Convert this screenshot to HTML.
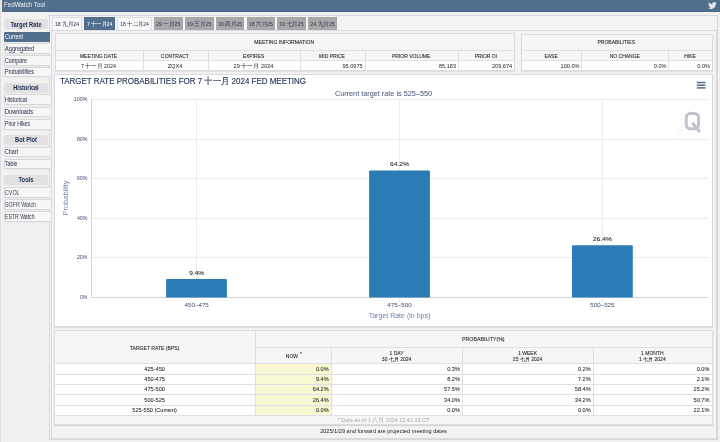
<!DOCTYPE html><html><head><meta charset="utf-8"><style>
html,body{margin:0;padding:0;width:720px;height:442px;overflow:hidden;background:#f1f1f1;font-family:"Liberation Sans", sans-serif;position:relative}
div{box-sizing:border-box}
</style></head><body>
<div style="position:absolute;left:0px;top:0px;width:1px;height:442px;background:#dedede"></div>
<div style="position:absolute;left:1.6px;top:0px;width:718.4px;height:11.8px;background:#516e8d;border-bottom:1px solid #4a6685"></div>
<svg style="position:absolute;left:707.8px;top:2.4px" width="8.8" height="7.2" viewBox="0 0 24 20"><path fill="#e2e6ec" d="M24 2.4c-.9.4-1.8.6-2.8.8 1-.6 1.8-1.6 2.2-2.7-1 .6-2 1-3.1 1.2C19.4.7 18.1 0 16.6 0c-2.7 0-4.9 2.2-4.9 4.9 0 .4 0 .8.1 1.1C7.7 5.8 4.1 3.9 1.7.9c-.5.7-.7 1.6-.7 2.5 0 1.700.9 3.2 2.2 4.1-.8 0-1.6-.2-2.2-.6v.1c0 2.4 1.7 4.4 3.9 4.8-.4.1-.8.2-1.3.2-.3 0-.6 0-.9-.1.6 2 2.4 3.4 4.6 3.4-1.700 1.3-3.8 2.1-6.100 2.1-.4 0-.8 0-1.2-.1 2.2 1.4 4.8 2.2 7.5 2.2 9.1 0 14-7.5 14-14v-.6c1-.7 1.8-1.6 2.5-2.5z"/></svg>
<div style="position:absolute;left:49.2px;top:15px;width:668.8px;height:425.3px;border:1px solid #d7d8dd;background:#f3f3f3"></div>
<div style="position:absolute;left:3.8px;top:19.4px;width:44.6px;height:10.1px;background:#e1e1e1;border-radius:2.5px"></div>
<div style="position:absolute;left:4px;top:31.5px;width:46px;height:10.2px;background:#516e8d;border-radius:1px 0 0 1px"></div>
<div style="position:absolute;left:3.6px;top:42.9px;width:46.4px;height:10.9px;background:#f7f7f7;border:1px solid #d5d7dc;border-right:none;border-radius:2.5px 0 0 2.5px;box-shadow:0 0.6px 0 rgba(0,0,0,0.05)"></div>
<div style="position:absolute;left:3.6px;top:54.8px;width:46.4px;height:10.9px;background:#f7f7f7;border:1px solid #d5d7dc;border-right:none;border-radius:2.5px 0 0 2.5px;box-shadow:0 0.6px 0 rgba(0,0,0,0.05)"></div>
<div style="position:absolute;left:3.6px;top:66.6px;width:46.4px;height:10.9px;background:#f7f7f7;border:1px solid #d5d7dc;border-right:none;border-radius:2.5px 0 0 2.5px;box-shadow:0 0.6px 0 rgba(0,0,0,0.05)"></div>
<div style="position:absolute;left:3.8px;top:82.7px;width:44.6px;height:10.1px;background:#e1e1e1;border-radius:2.5px"></div>
<div style="position:absolute;left:3.6px;top:94.3px;width:46.4px;height:10.9px;background:#f7f7f7;border:1px solid #d5d7dc;border-right:none;border-radius:2.5px 0 0 2.5px;box-shadow:0 0.6px 0 rgba(0,0,0,0.05)"></div>
<div style="position:absolute;left:3.6px;top:106.5px;width:46.4px;height:10.9px;background:#f7f7f7;border:1px solid #d5d7dc;border-right:none;border-radius:2.5px 0 0 2.5px;box-shadow:0 0.6px 0 rgba(0,0,0,0.05)"></div>
<div style="position:absolute;left:3.6px;top:118.7px;width:46.4px;height:10.9px;background:#f7f7f7;border:1px solid #d5d7dc;border-right:none;border-radius:2.5px 0 0 2.5px;box-shadow:0 0.6px 0 rgba(0,0,0,0.05)"></div>
<div style="position:absolute;left:3.8px;top:135.1px;width:44.6px;height:10.1px;background:#e1e1e1;border-radius:2.5px"></div>
<div style="position:absolute;left:3.6px;top:146.5px;width:46.4px;height:10.9px;background:#f7f7f7;border:1px solid #d5d7dc;border-right:none;border-radius:2.5px 0 0 2.5px;box-shadow:0 0.6px 0 rgba(0,0,0,0.05)"></div>
<div style="position:absolute;left:3.6px;top:158.6px;width:46.4px;height:10.9px;background:#f7f7f7;border:1px solid #d5d7dc;border-right:none;border-radius:2.5px 0 0 2.5px;box-shadow:0 0.6px 0 rgba(0,0,0,0.05)"></div>
<div style="position:absolute;left:3.8px;top:175.1px;width:44.6px;height:10.1px;background:#e1e1e1;border-radius:2.5px"></div>
<div style="position:absolute;left:3.6px;top:187.3px;width:46.4px;height:10.9px;background:#f7f7f7;border:1px solid #d5d7dc;border-right:none;border-radius:2.5px 0 0 2.5px;box-shadow:0 0.6px 0 rgba(0,0,0,0.05)"></div>
<div style="position:absolute;left:3.6px;top:199.1px;width:46.4px;height:10.9px;background:#f7f7f7;border:1px solid #d5d7dc;border-right:none;border-radius:2.5px 0 0 2.5px;box-shadow:0 0.6px 0 rgba(0,0,0,0.05)"></div>
<div style="position:absolute;left:3.6px;top:210.9px;width:46.4px;height:10.9px;background:#f7f7f7;border:1px solid #d5d7dc;border-right:none;border-radius:2.5px 0 0 2.5px;box-shadow:0 0.6px 0 rgba(0,0,0,0.05)"></div>
<div style="position:absolute;left:52px;top:17.3px;width:30px;height:13.2px;background:#f8f8f8;border:1px solid #dcdde1;border-bottom:none"></div>
<div style="position:absolute;left:84px;top:17.3px;width:31.3px;height:13.2px;background:#516e8d"></div>
<div style="position:absolute;left:117.3px;top:17.3px;width:34.4px;height:13.2px;background:#f8f8f8;border:1px solid #dcdde1;border-bottom:none"></div>
<div style="position:absolute;left:153.8px;top:17.3px;width:28.8px;height:13.2px;background:#a8a8a8"></div>
<div style="position:absolute;left:184.9px;top:17.3px;width:28.9px;height:13.2px;background:#a8a8a8"></div>
<div style="position:absolute;left:216px;top:17.3px;width:28.4px;height:13.2px;background:#a8a8a8"></div>
<div style="position:absolute;left:246.7px;top:17.3px;width:28.4px;height:13.2px;background:#a8a8a8"></div>
<div style="position:absolute;left:277.3px;top:17.3px;width:28.5px;height:13.2px;background:#a8a8a8"></div>
<div style="position:absolute;left:308px;top:17.3px;width:29px;height:13.2px;background:#a8a8a8"></div>
<div style="position:absolute;left:51.2px;top:30.4px;width:665.6px;height:408.4px;border:1px solid #dadbe0;background:#f3f3f3"></div>
<div style="position:absolute;left:54.5px;top:32.8px;width:460.5px;height:38.60000000000001px;background:#f6f6f6;border:1px solid #dbdce0;box-shadow:0 1px 1px rgba(0,0,0,0.08)"></div>
<div style="position:absolute;left:55.5px;top:59.8px;width:458.5px;height:10.600000000000009px;background:#ffffff"></div>
<div style="position:absolute;left:54.5px;top:50.0px;width:459.5px;height:1px;background:#dfe0e3"></div>
<div style="position:absolute;left:54.5px;top:59.8px;width:459.5px;height:1px;background:#dfe0e3"></div>
<div style="position:absolute;left:142.5px;top:50.0px;width:1px;height:21.400000000000006px;background:#dfe0e3"></div>
<div style="position:absolute;left:207.5px;top:50.0px;width:1px;height:21.400000000000006px;background:#dfe0e3"></div>
<div style="position:absolute;left:299.5px;top:50.0px;width:1px;height:21.400000000000006px;background:#dfe0e3"></div>
<div style="position:absolute;left:364.5px;top:50.0px;width:1px;height:21.400000000000006px;background:#dfe0e3"></div>
<div style="position:absolute;left:457.8px;top:50.0px;width:1px;height:21.400000000000006px;background:#dfe0e3"></div>
<div style="position:absolute;left:520.8px;top:33.5px;width:192.0px;height:37.900000000000006px;background:#f6f6f6;border:1px solid #dbdce0;box-shadow:0 1px 1px rgba(0,0,0,0.08)"></div>
<div style="position:absolute;left:521.8px;top:59.8px;width:190.0px;height:10.600000000000009px;background:#ffffff"></div>
<div style="position:absolute;left:520.8px;top:50.0px;width:191.0px;height:1px;background:#dfe0e3"></div>
<div style="position:absolute;left:520.8px;top:59.8px;width:191.0px;height:1px;background:#dfe0e3"></div>
<div style="position:absolute;left:581.3px;top:50.0px;width:1px;height:21.400000000000006px;background:#dfe0e3"></div>
<div style="position:absolute;left:668.3px;top:50.0px;width:1px;height:21.400000000000006px;background:#dfe0e3"></div>
<div style="position:absolute;left:54.3px;top:73.5px;width:658.5px;height:253px;background:#ffffff;border:1px solid #d9dade;box-shadow:0 1px 1px rgba(0,0,0,0.08)"></div>
<svg style="position:absolute;left:0;top:0" width="720" height="442"><line x1="91" x2="708" y1="99.5" y2="99.5" stroke="#ebebeb" stroke-width="1"/><line x1="91" x2="708" y1="139.5" y2="139.5" stroke="#ebebeb" stroke-width="1"/><line x1="91" x2="708" y1="178.5" y2="178.5" stroke="#ebebeb" stroke-width="1"/><line x1="91" x2="708" y1="218.5" y2="218.5" stroke="#ebebeb" stroke-width="1"/><line x1="91" x2="708" y1="257.5" y2="257.5" stroke="#ebebeb" stroke-width="1"/><line x1="196.5" x2="196.5" y1="99" y2="297.5" stroke="#ebebeb" stroke-width="1"/><line x1="196.5" x2="196.5" y1="297.5" y2="301.5" stroke="#ebebeb" stroke-width="1"/><line x1="399.5" x2="399.5" y1="99" y2="297.5" stroke="#ebebeb" stroke-width="1"/><line x1="399.5" x2="399.5" y1="297.5" y2="301.5" stroke="#ebebeb" stroke-width="1"/><line x1="602.5" x2="602.5" y1="99" y2="297.5" stroke="#ebebeb" stroke-width="1"/><line x1="602.5" x2="602.5" y1="297.5" y2="301.5" stroke="#ebebeb" stroke-width="1"/><line x1="91" x2="708" y1="297.5" y2="297.5" stroke="#d3d4d8" stroke-width="1"/><line x1="91.5" x2="91.5" y1="99" y2="297.5" stroke="#d3d4d8" stroke-width="1"/><path d="M166.1 297.5 V279.888 Q166.1 278.888 167.1 278.888 H225.89999999999998 Q226.89999999999998 278.888 226.89999999999998 279.888 V297.5 Z" fill="#2b7bb5"/><path d="M369.1 297.5 V171.38400000000001 Q369.1 170.38400000000001 370.1 170.38400000000001 H428.90000000000003 Q429.90000000000003 170.38400000000001 429.90000000000003 171.38400000000001 V297.5 Z" fill="#2b7bb5"/><path d="M572.0 297.5 V246.228 Q572.0 245.228 573.0 245.228 H631.8 Q632.8 245.228 632.8 246.228 V297.5 Z" fill="#2b7bb5"/><rect x="696.8" y="81.75" width="8.7" height="1.5" fill="#516e8d"/><rect x="696.8" y="84.45" width="8.7" height="1.5" fill="#516e8d"/><rect x="696.8" y="87.15" width="8.7" height="1.5" fill="#516e8d"/></svg>
<div style="position:absolute;left:54.2px;top:330.4px;width:658.5px;height:94.80000000000001px;background:#f6f6f6;border:1px solid #dbdce0;box-shadow:0 1px 1px rgba(0,0,0,0.12)"></div>
<div style="position:absolute;left:55.2px;top:363.4px;width:656.5px;height:51.5px;background:#ffffff"></div>
<div style="position:absolute;left:255.0px;top:363.4px;width:76.0px;height:51.5px;background:#f8f8d2"></div>
<div style="position:absolute;left:54.2px;top:363.4px;width:657.5px;height:1px;background:#dfe0e3"></div>
<div style="position:absolute;left:54.2px;top:373.6px;width:657.5px;height:1px;background:#dfe0e3"></div>
<div style="position:absolute;left:54.2px;top:383.9px;width:657.5px;height:1px;background:#dfe0e3"></div>
<div style="position:absolute;left:54.2px;top:394.2px;width:657.5px;height:1px;background:#dfe0e3"></div>
<div style="position:absolute;left:54.2px;top:404.5px;width:657.5px;height:1px;background:#dfe0e3"></div>
<div style="position:absolute;left:54.2px;top:414.9px;width:657.5px;height:1px;background:#dfe0e3"></div>
<div style="position:absolute;left:255.0px;top:347.3px;width:456.70000000000005px;height:1px;background:#dfe0e3"></div>
<div style="position:absolute;left:255.0px;top:330.4px;width:1px;height:84.5px;background:#dfe0e3"></div>
<div style="position:absolute;left:331.0px;top:347.3px;width:1px;height:67.59999999999997px;background:#dfe0e3"></div>
<div style="position:absolute;left:462.2px;top:347.3px;width:1px;height:67.59999999999997px;background:#dfe0e3"></div>
<div style="position:absolute;left:593.0px;top:347.3px;width:1px;height:67.59999999999997px;background:#dfe0e3"></div>
<svg style="position:absolute;left:0;top:0;will-change:transform" width="720" height="442" font-family='"Liberation Sans", sans-serif'><text x="4" y="7.1" font-size="6.7" fill="#eef1f5" text-anchor="start" textLength="41" lengthAdjust="spacingAndGlyphs">FedWatch Tool</text><text x="26" y="26.5" font-size="6.3" fill="#1b2a4e" text-anchor="middle" font-weight="bold" textLength="31.2" lengthAdjust="spacingAndGlyphs">Target Rate</text><text x="5.1" y="38.9" font-size="6.5" fill="#ffffff" text-anchor="start" textLength="17.9" lengthAdjust="spacingAndGlyphs">Current</text><text x="5.0" y="50.6" font-size="6.5" fill="#2c3650" text-anchor="start" textLength="29.2" lengthAdjust="spacingAndGlyphs" stroke="#2c3650" stroke-width="0.05">Aggregated</text><text x="5.0" y="62.5" font-size="6.5" fill="#2c3650" text-anchor="start" textLength="21.9" lengthAdjust="spacingAndGlyphs" stroke="#2c3650" stroke-width="0.05">Compare</text><text x="5.0" y="74.3" font-size="6.5" fill="#2c3650" text-anchor="start" textLength="29" lengthAdjust="spacingAndGlyphs" stroke="#2c3650" stroke-width="0.05">Probabilities</text><text x="26" y="89.8" font-size="6.3" fill="#1b2a4e" text-anchor="middle" font-weight="bold" textLength="25.3" lengthAdjust="spacingAndGlyphs">Historical</text><text x="5.0" y="102.0" font-size="6.5" fill="#2c3650" text-anchor="start" textLength="21.9" lengthAdjust="spacingAndGlyphs" stroke="#2c3650" stroke-width="0.05">Historical</text><text x="5.0" y="114.2" font-size="6.5" fill="#2c3650" text-anchor="start" textLength="28" lengthAdjust="spacingAndGlyphs" stroke="#2c3650" stroke-width="0.05">Downloads</text><text x="5.0" y="126.4" font-size="6.5" fill="#2c3650" text-anchor="start" textLength="25" lengthAdjust="spacingAndGlyphs" stroke="#2c3650" stroke-width="0.05">Prior Hikes</text><text x="26" y="142.2" font-size="6.3" fill="#1b2a4e" text-anchor="middle" font-weight="bold" textLength="22" lengthAdjust="spacingAndGlyphs">Bot Plot</text><text x="5.0" y="154.2" font-size="6.5" fill="#2c3650" text-anchor="start" textLength="13" lengthAdjust="spacingAndGlyphs" stroke="#2c3650" stroke-width="0.05">Chart</text><text x="5.0" y="165.9" font-size="6.5" fill="#2c3650" text-anchor="start" textLength="12.5" lengthAdjust="spacingAndGlyphs" stroke="#2c3650" stroke-width="0.05">Table</text><text x="26" y="182.2" font-size="6.3" fill="#1b2a4e" text-anchor="middle" font-weight="bold" textLength="15" lengthAdjust="spacingAndGlyphs">Tools</text><text x="5.0" y="195.0" font-size="6.5" fill="#474e62" text-anchor="start" textLength="14.6" lengthAdjust="spacingAndGlyphs" stroke="#474e62" stroke-width="0.05">CVOL</text><text x="5.0" y="206.79999999999998" font-size="6.5" fill="#474e62" text-anchor="start" textLength="31" lengthAdjust="spacingAndGlyphs" stroke="#474e62" stroke-width="0.05">SOFR Watch</text><text x="5.0" y="218.6" font-size="6.5" fill="#3a4150" text-anchor="start" textLength="29.5" lengthAdjust="spacingAndGlyphs" stroke="#3a4150" stroke-width="0.05">ESTR Watch</text><text x="67.0" y="26.2" font-size="5.6" fill="#34405e" text-anchor="middle" textLength="24" lengthAdjust="spacingAndGlyphs" stroke="#34405e" stroke-width="0.05">18 九月24</text><text x="99.65" y="26.2" font-size="5.6" fill="#ffffff" text-anchor="middle" textLength="25.3" lengthAdjust="spacingAndGlyphs" stroke="#ffffff" stroke-width="0.05">7 十一月24</text><text x="134.5" y="26.2" font-size="5.6" fill="#34405e" text-anchor="middle" textLength="28.4" lengthAdjust="spacingAndGlyphs" stroke="#34405e" stroke-width="0.05">18 十二月24</text><text x="168.20000000000002" y="26.2" font-size="5.6" fill="#34405e" text-anchor="middle" textLength="24.3" lengthAdjust="spacingAndGlyphs" stroke="#34405e" stroke-width="0.05">29 一月25</text><text x="199.35" y="26.2" font-size="5.6" fill="#34405e" text-anchor="middle" textLength="24.4" lengthAdjust="spacingAndGlyphs" stroke="#34405e" stroke-width="0.05">19 三月25</text><text x="230.2" y="26.2" font-size="5.6" fill="#34405e" text-anchor="middle" textLength="23.9" lengthAdjust="spacingAndGlyphs" stroke="#34405e" stroke-width="0.05">30 四月25</text><text x="260.9" y="26.2" font-size="5.6" fill="#34405e" text-anchor="middle" textLength="23.9" lengthAdjust="spacingAndGlyphs" stroke="#34405e" stroke-width="0.05">18 六月25</text><text x="291.55" y="26.2" font-size="5.6" fill="#34405e" text-anchor="middle" textLength="24.0" lengthAdjust="spacingAndGlyphs" stroke="#34405e" stroke-width="0.05">30 七月25</text><text x="322.5" y="26.2" font-size="5.6" fill="#34405e" text-anchor="middle" textLength="24.5" lengthAdjust="spacingAndGlyphs" stroke="#34405e" stroke-width="0.05">24 九月25</text><text x="284.25" y="44.3" font-size="5" fill="#1a1a1a" text-anchor="middle" textLength="60" lengthAdjust="spacingAndGlyphs" stroke="#1a1a1a" stroke-width="0.07">MEETING INFORMATION</text><text x="98.5" y="57.8" font-size="5" fill="#1a1a1a" text-anchor="middle" stroke="#1a1a1a" stroke-width="0.07">MEETING DATE</text><text x="175.0" y="57.8" font-size="5" fill="#1a1a1a" text-anchor="middle" stroke="#1a1a1a" stroke-width="0.07">CONTRACT</text><text x="253.5" y="57.8" font-size="5" fill="#1a1a1a" text-anchor="middle" stroke="#1a1a1a" stroke-width="0.07">EXPIRES</text><text x="332.0" y="57.8" font-size="5" fill="#1a1a1a" text-anchor="middle" stroke="#1a1a1a" stroke-width="0.07">MID PRICE</text><text x="411.15" y="57.8" font-size="5" fill="#1a1a1a" text-anchor="middle" stroke="#1a1a1a" stroke-width="0.07">PRIOR VOLUME</text><text x="485.9" y="57.8" font-size="5" fill="#1a1a1a" text-anchor="middle" stroke="#1a1a1a" stroke-width="0.07">PRIOR OI</text><text x="98.5" y="68.2" font-size="5.6" fill="#1e1e1e" text-anchor="middle" textLength="35" lengthAdjust="spacingAndGlyphs">7 十一月 2024</text><text x="175.0" y="68.2" font-size="5.6" fill="#1e1e1e" text-anchor="middle">ZQX4</text><text x="253.5" y="68.2" font-size="5.6" fill="#1e1e1e" text-anchor="middle">29 十一月 2024</text><text x="362.7" y="68.2" font-size="5.6" fill="#1e1e1e" text-anchor="end">95.0975</text><text x="456.0" y="68.2" font-size="5.6" fill="#1e1e1e" text-anchor="end">85,183</text><text x="512.2" y="68.2" font-size="5.6" fill="#1e1e1e" text-anchor="end">209,674</text><text x="616.3" y="44.3" font-size="5" fill="#1a1a1a" text-anchor="middle" stroke="#1a1a1a" stroke-width="0.07">PROBABILITIES</text><text x="551.05" y="57.8" font-size="5" fill="#1a1a1a" text-anchor="middle" stroke="#1a1a1a" stroke-width="0.07">EASE</text><text x="624.8" y="57.8" font-size="5" fill="#1a1a1a" text-anchor="middle" stroke="#1a1a1a" stroke-width="0.07">NO CHANGE</text><text x="690.05" y="57.8" font-size="5" fill="#1a1a1a" text-anchor="middle" stroke="#1a1a1a" stroke-width="0.07">HIKE</text><text x="579.5" y="68.2" font-size="5.6" fill="#1e1e1e" text-anchor="end">100.0%</text><text x="666.5" y="68.2" font-size="5.6" fill="#1e1e1e" text-anchor="end">0.0%</text><text x="710.0" y="68.2" font-size="5.6" fill="#1e1e1e" text-anchor="end">0.0%</text><text x="60" y="83.8" font-size="8.6" fill="#22305a" text-anchor="start" textLength="246" lengthAdjust="spacingAndGlyphs" stroke="#22305a" stroke-width="0.12">TARGET RATE PROBABILITIES FOR 7 十一月 2024 FED MEETING</text><text x="383.5" y="95.8" font-size="6.3" fill="#42527a" text-anchor="middle" textLength="97.2" lengthAdjust="spacingAndGlyphs">Current target rate is 525–550</text><text x="87.4" y="101.2" font-size="5.4" fill="#3a4870" text-anchor="end" textLength="13.6" lengthAdjust="spacingAndGlyphs">100%</text><text x="87.4" y="141.2" font-size="5.4" fill="#3a4870" text-anchor="end" textLength="10.5" lengthAdjust="spacingAndGlyphs">80%</text><text x="87.4" y="180.2" font-size="5.4" fill="#3a4870" text-anchor="end" textLength="10.5" lengthAdjust="spacingAndGlyphs">60%</text><text x="87.4" y="220.2" font-size="5.4" fill="#3a4870" text-anchor="end" textLength="10.5" lengthAdjust="spacingAndGlyphs">40%</text><text x="87.4" y="259.2" font-size="5.4" fill="#3a4870" text-anchor="end" textLength="10.5" lengthAdjust="spacingAndGlyphs">20%</text><text x="87.4" y="299.2" font-size="5.4" fill="#3a4870" text-anchor="end" textLength="7.5" lengthAdjust="spacingAndGlyphs">0%</text><text x="196.7" y="274.8" font-size="6.2" fill="#2a2a2a" text-anchor="middle" textLength="14.7" lengthAdjust="spacingAndGlyphs" stroke="#2a2a2a" stroke-width="0.08">9.4%</text><text x="196.7" y="306.8" font-size="5.1" fill="#3f4c6c" text-anchor="middle" textLength="24.3" lengthAdjust="spacingAndGlyphs">450–475</text><text x="399.5" y="166.2" font-size="6.2" fill="#2a2a2a" text-anchor="middle" textLength="19.1" lengthAdjust="spacingAndGlyphs" stroke="#2a2a2a" stroke-width="0.08">64.2%</text><text x="399.5" y="306.8" font-size="5.1" fill="#3f4c6c" text-anchor="middle" textLength="24.3" lengthAdjust="spacingAndGlyphs">475–500</text><text x="602.4" y="241.2" font-size="6.2" fill="#2a2a2a" text-anchor="middle" textLength="19.1" lengthAdjust="spacingAndGlyphs" stroke="#2a2a2a" stroke-width="0.08">26.4%</text><text x="602.4" y="306.8" font-size="5.1" fill="#3f4c6c" text-anchor="middle" textLength="24.3" lengthAdjust="spacingAndGlyphs">500–525</text><text x="399.5" y="317.9" font-size="6.6" fill="#6e85a8" text-anchor="middle" textLength="61.6" lengthAdjust="spacingAndGlyphs">Target Rate (in bps)</text><text transform="translate(68.0,198.1) rotate(-90)" font-size="6.4" fill="#7388aa" text-anchor="middle" textLength="35" lengthAdjust="spacingAndGlyphs">Probability</text><g fill="none" stroke="#c0c4ce" stroke-width="3"><rect x="686.3" y="113.5" width="12.2" height="15.3" rx="4"/><path d="M692.4 122.8 L699.8 132"/></g><line x1="695" y1="102.5" x2="696" y2="102.5" stroke="#eceef2" stroke-width="0.7"/><line x1="693" y1="105" x2="695" y2="105" stroke="#eceef2" stroke-width="0.7"/><line x1="690.5" y1="107" x2="693" y2="107" stroke="#eceef2" stroke-width="0.7"/><line x1="688" y1="110" x2="691" y2="110" stroke="#eceef2" stroke-width="0.7"/><line x1="684" y1="113.5" x2="686" y2="113.5" stroke="#eceef2" stroke-width="0.7"/><line x1="682" y1="116" x2="685" y2="116" stroke="#eceef2" stroke-width="0.7"/><line x1="679.5" y1="119" x2="685" y2="119" stroke="#eceef2" stroke-width="0.7"/><line x1="677" y1="121.5" x2="684" y2="121.5" stroke="#eceef2" stroke-width="0.7"/><line x1="681" y1="124.5" x2="685" y2="124.5" stroke="#eceef2" stroke-width="0.7"/><line x1="680" y1="127" x2="685" y2="127" stroke="#eceef2" stroke-width="0.7"/><line x1="679" y1="130" x2="684" y2="130" stroke="#eceef2" stroke-width="0.7"/><line x1="678" y1="133.5" x2="681" y2="133.5" stroke="#eceef2" stroke-width="0.7"/><line x1="677" y1="136" x2="679" y2="136" stroke="#eceef2" stroke-width="0.7"/><text x="154.6" y="349.5" font-size="5" fill="#1a1a1a" text-anchor="middle" textLength="49.6" lengthAdjust="spacingAndGlyphs" stroke="#1a1a1a" stroke-width="0.07">TARGET RATE (BPS)</text><text x="483.35" y="341.0" font-size="5" fill="#1a1a1a" text-anchor="middle" textLength="42.5" lengthAdjust="spacingAndGlyphs" stroke="#1a1a1a" stroke-width="0.07">PROBABILITY(%)</text><text x="291.9" y="357.6" font-size="5" fill="#1a1a1a" text-anchor="middle" stroke="#1a1a1a" stroke-width="0.07">NOW</text><text x="300.8" y="355.6" font-size="4.5" fill="#1a1a1a" text-anchor="middle" stroke="#1a1a1a" stroke-width="0.07">*</text><text x="396.6" y="354.7" font-size="5" fill="#1a1a1a" text-anchor="middle" stroke="#1a1a1a" stroke-width="0.07">1 DAY</text><text x="396.6" y="361.2" font-size="5" fill="#1a1a1a" text-anchor="middle" stroke="#1a1a1a" stroke-width="0.07">30 七月 2024</text><text x="527.6" y="354.7" font-size="5" fill="#1a1a1a" text-anchor="middle" stroke="#1a1a1a" stroke-width="0.07">1 WEEK</text><text x="527.6" y="361.2" font-size="5" fill="#1a1a1a" text-anchor="middle" stroke="#1a1a1a" stroke-width="0.07">25 七月 2024</text><text x="652.35" y="354.7" font-size="5" fill="#1a1a1a" text-anchor="middle" stroke="#1a1a1a" stroke-width="0.07">1 MONTH</text><text x="652.35" y="361.2" font-size="5" fill="#1a1a1a" text-anchor="middle" stroke="#1a1a1a" stroke-width="0.07">1 七月 2024</text><text x="154.6" y="370.79999999999995" font-size="5.6" fill="#1e1e1e" text-anchor="middle" stroke="#1e1e1e" stroke-width="0.06">425-450</text><text x="328.7" y="370.79999999999995" font-size="5.6" fill="#1e1e1e" text-anchor="end" stroke="#1e1e1e" stroke-width="0.06">0.0%</text><text x="459.9" y="370.79999999999995" font-size="5.6" fill="#1e1e1e" text-anchor="end" stroke="#1e1e1e" stroke-width="0.06">0.3%</text><text x="590.7" y="370.79999999999995" font-size="5.6" fill="#1e1e1e" text-anchor="end" stroke="#1e1e1e" stroke-width="0.06">0.2%</text><text x="709.4000000000001" y="370.79999999999995" font-size="5.6" fill="#1e1e1e" text-anchor="end" stroke="#1e1e1e" stroke-width="0.06">0.0%</text><text x="154.6" y="381.0" font-size="5.6" fill="#1e1e1e" text-anchor="middle" stroke="#1e1e1e" stroke-width="0.06">450-475</text><text x="328.7" y="381.0" font-size="5.6" fill="#1e1e1e" text-anchor="end" stroke="#1e1e1e" stroke-width="0.06">9.4%</text><text x="459.9" y="381.0" font-size="5.6" fill="#1e1e1e" text-anchor="end" stroke="#1e1e1e" stroke-width="0.06">8.2%</text><text x="590.7" y="381.0" font-size="5.6" fill="#1e1e1e" text-anchor="end" stroke="#1e1e1e" stroke-width="0.06">7.2%</text><text x="709.4000000000001" y="381.0" font-size="5.6" fill="#1e1e1e" text-anchor="end" stroke="#1e1e1e" stroke-width="0.06">2.1%</text><text x="154.6" y="391.29999999999995" font-size="5.6" fill="#1e1e1e" text-anchor="middle" stroke="#1e1e1e" stroke-width="0.06">475-500</text><text x="328.7" y="391.29999999999995" font-size="5.6" fill="#1e1e1e" text-anchor="end" stroke="#1e1e1e" stroke-width="0.06">64.2%</text><text x="459.9" y="391.29999999999995" font-size="5.6" fill="#1e1e1e" text-anchor="end" stroke="#1e1e1e" stroke-width="0.06">57.5%</text><text x="590.7" y="391.29999999999995" font-size="5.6" fill="#1e1e1e" text-anchor="end" stroke="#1e1e1e" stroke-width="0.06">58.4%</text><text x="709.4000000000001" y="391.29999999999995" font-size="5.6" fill="#1e1e1e" text-anchor="end" stroke="#1e1e1e" stroke-width="0.06">25.2%</text><text x="154.6" y="401.59999999999997" font-size="5.6" fill="#1e1e1e" text-anchor="middle" stroke="#1e1e1e" stroke-width="0.06">500-525</text><text x="328.7" y="401.59999999999997" font-size="5.6" fill="#1e1e1e" text-anchor="end" stroke="#1e1e1e" stroke-width="0.06">26.4%</text><text x="459.9" y="401.59999999999997" font-size="5.6" fill="#1e1e1e" text-anchor="end" stroke="#1e1e1e" stroke-width="0.06">34.0%</text><text x="590.7" y="401.59999999999997" font-size="5.6" fill="#1e1e1e" text-anchor="end" stroke="#1e1e1e" stroke-width="0.06">34.2%</text><text x="709.4000000000001" y="401.59999999999997" font-size="5.6" fill="#1e1e1e" text-anchor="end" stroke="#1e1e1e" stroke-width="0.06">50.7%</text><text x="154.6" y="411.9" font-size="5.6" fill="#1e1e1e" text-anchor="middle" stroke="#1e1e1e" stroke-width="0.06">525-550 (Current)</text><text x="328.7" y="411.9" font-size="5.6" fill="#1e1e1e" text-anchor="end" stroke="#1e1e1e" stroke-width="0.06">0.0%</text><text x="459.9" y="411.9" font-size="5.6" fill="#1e1e1e" text-anchor="end" stroke="#1e1e1e" stroke-width="0.06">0.0%</text><text x="590.7" y="411.9" font-size="5.6" fill="#1e1e1e" text-anchor="end" stroke="#1e1e1e" stroke-width="0.06">0.0%</text><text x="709.4000000000001" y="411.9" font-size="5.6" fill="#1e1e1e" text-anchor="end" stroke="#1e1e1e" stroke-width="0.06">22.1%</text><text x="383.5" y="422.3" font-size="5.5" fill="#a9a9a9" text-anchor="middle" textLength="91.6" lengthAdjust="spacingAndGlyphs">* Data as of 1 八月 2024 12:41:13 CT</text><text x="383.5" y="433.2" font-size="5.6" fill="#1e1e1e" text-anchor="middle" textLength="126.7" lengthAdjust="spacingAndGlyphs">2025/1/29 and forward are projected meeting dates</text></svg>
</body></html>
